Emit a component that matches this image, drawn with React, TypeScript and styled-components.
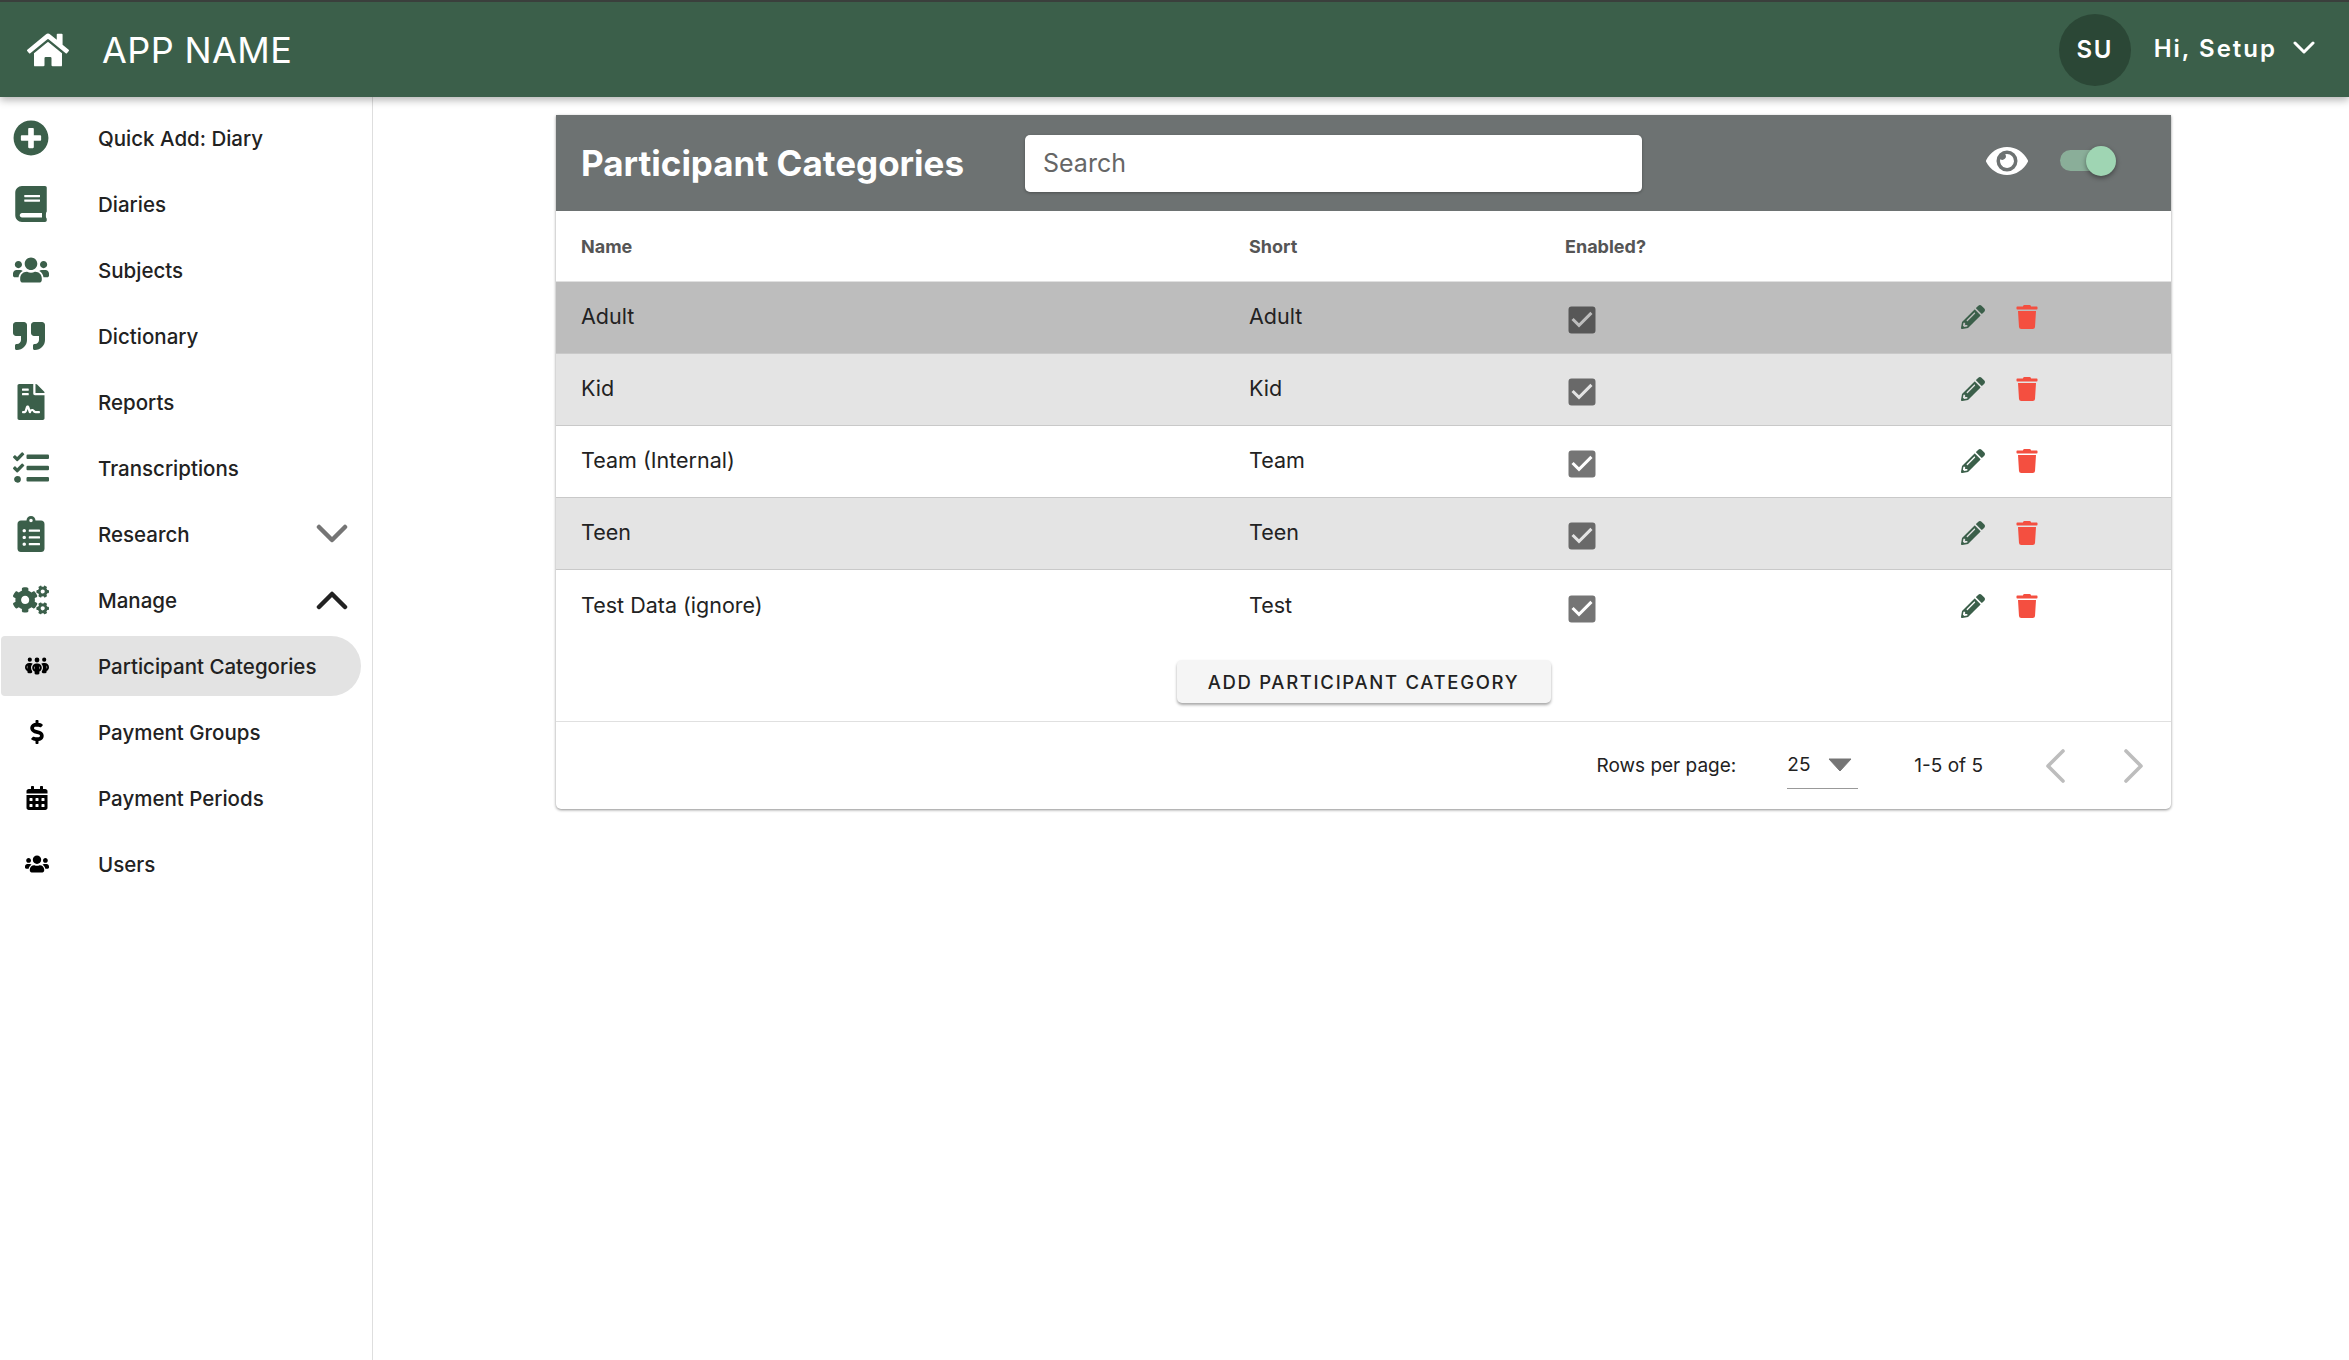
import React from "react";
import styled, { createGlobalStyle } from "styled-components";
import {
  FaHome, FaPlusCircle, FaBook, FaUsers, FaQuoteRight, FaFileContract, FaTasks,
  FaClipboardList, FaCogs, FaDollarSign, FaCalendarAlt, FaEye, FaPencilAlt, FaTrash,
} from "react-icons/fa";
import { FaPeopleGroup } from "react-icons/fa6";
import { MdCheckBox } from "react-icons/md";

const GREEN = "#3b5f4a";

const Global = createGlobalStyle`
  html, body { margin: 0; padding: 0; background: #fff; }
  body { font-family: Inter, "Noto Sans", "Liberation Sans", sans-serif; color: #222; }
`;

const Page = styled.div`
  width: 2349px;
  height: 1360px;
  display: flex;
  flex-direction: column;
  overflow: hidden;
`;

const Header = styled.header`
  position: relative;
  z-index: 2;
  height: 97px;
  box-sizing: border-box;
  border-top: 2px solid #3a3f3c;
  background: ${GREEN};
  box-shadow: 0 3px 8px rgba(0, 0, 0, 0.3);
  display: flex;
  align-items: center;
  color: #fff;
  padding: 0 34px 0 27px;
`;

const HomeSlot = styled.div`
  width: 75px;
  display: flex;
  font-size: 42px;
  svg { display: block; }
`;

const AppName = styled.div`
  font-size: 36px;
  font-weight: 400;
  flex: 1;
  letter-spacing: 0.4px;
`;

const Avatar = styled.div`
  width: 72px;
  height: 72px;
  border-radius: 50%;
  background: #2b4736;
  display: flex;
  align-items: center;
  justify-content: center;
  font-size: 24px;
  font-weight: 600;
  letter-spacing: 1.5px;
  margin-right: 23px;
`;

const Greeting = styled.div`
  font-size: 24px;
  font-weight: 600;
  letter-spacing: 2px;
  margin-top: -3px;
  margin-right: 16px;
`;

const Body = styled.div`
  flex: 1;
  display: flex;
  min-height: 0;
`;

const Sidebar = styled.nav`
  width: 373px;
  box-sizing: border-box;
  border-right: 1px solid #dedede;
  padding-top: 8px;
  display: flex;
  flex-direction: column;
`;

const NavRow = styled.div<{ $sub?: boolean; $active?: boolean }>`
  height: ${(p) => (p.$active ? 60 : 66)}px;
  margin: ${(p) => (p.$active ? "3px 11px 3px 1px" : "0")};
  box-sizing: border-box;
  display: flex;
  align-items: center;
  padding-left: ${(p) => (p.$sub ? (p.$active ? 24 : 25) : 13)}px;
  padding-right: 24px;
  background: ${(p) => (p.$active ? "#e3e3e3" : "transparent")};
  border-radius: ${(p) => (p.$active ? "4px 30px 30px 4px" : "0")};
`;

const NavIcon = styled.div<{ $sub?: boolean; $h: number }>`
  width: ${(p) => (p.$sub ? 73 : 85)}px;
  flex: none;
  display: flex;
  align-items: center;
  color: ${(p) => (p.$sub ? "#000" : GREEN)};
  svg {
    display: block;
    height: ${(p) => p.$h}px;
    width: auto;
  }
`;

const NavLabel = styled.span`
  flex: 1;
  font-size: 20.5px;
  font-weight: 500;
  color: #222;
  white-space: nowrap;
`;

const Main = styled.main`
  flex: 1;
  padding: 18px 0 0 183px;
`;

const Card = styled.section`
  width: 1615px;
  border-radius: 0 0 5px 5px;
  box-shadow: 0 1px 3px rgba(0, 0, 0, 0.45);
  background: #fff;
`;

const CardHead = styled.div`
  height: 96px;
  background: #6d7272;
  display: flex;
  align-items: center;
  padding: 0 62px 0 25px;
  color: #fff;
`;

const Title = styled.h1`
  margin: 0 25px 0 0;
  width: 419px;
  font-size: 35px;
  font-weight: 700;
  white-space: nowrap;
`;

const SearchInput = styled.input`
  width: 617px;
  height: 57px;
  box-sizing: border-box;
  border: 0;
  border-radius: 5px;
  padding: 0 18px;
  font: 400 25px Inter, "Noto Sans", sans-serif;
  color: #555;
  background: #fff;
  box-shadow: 0 1px 3px rgba(0, 0, 0, 0.3);
  &::placeholder { color: #666; opacity: 1; }
`;

const HeadTools = styled.div`
  margin-left: auto;
  display: flex;
  align-items: center;
  margin-top: -5px;
`;

const EyeSlot = styled.div`
  font-size: 42px;
  margin-right: 32px;
  display: flex;
  svg { display: block; }
`;

const Toggle = styled.div`
  position: relative;
  width: 49px;
  height: 21px;
  border-radius: 11px;
  background: #8aae99;
`;

const Thumb = styled.span`
  position: absolute;
  right: -7px;
  top: -4px;
  width: 30px;
  height: 30px;
  border-radius: 50%;
  background: #9fd5b3;
  box-shadow: 0 2px 5px rgba(0, 0, 0, 0.4);
`;

const GridRow = styled.div<{ $bg?: string; $last?: boolean; $head?: boolean }>`
  display: grid;
  grid-template-columns: 668px 316px 396px 1fr;
  align-items: center;
  box-sizing: border-box;
  height: ${(p) => (p.$head ? 71 : 72)}px;
  padding-left: 25px;
  background: ${(p) => p.$bg || "#fff"};
  border-bottom: ${(p) => (p.$last ? "0" : "1px solid #c9c9c9")};
  ${(p) => (p.$head ? "border-bottom: 1px solid #e0e0e0;" : "")}
`;

const HeadCell = styled.div`
  font-size: 18px;
  font-weight: 700;
  color: #555;
`;

const Cell = styled.div`
  font-size: 21.5px;
  font-weight: 400;
  color: #222;
  margin-top: -3px;
`;

const CheckCell = styled.div`
  color: rgba(0, 0, 0, 0.54);
  font-size: 36px;
  margin-left: -1px;
  margin-top: 5px;
  height: 36px;
  svg { display: block; }
`;

const Actions = styled.div`
  display: flex;
  align-items: center;
  gap: 30px;
  font-size: 24px;
  margin-top: -1px;
  svg { display: block; height: 24px; width: auto; }
`;

const EditIcon = styled(FaPencilAlt)`
  color: ${GREEN};
`;

const DeleteIcon = styled(FaTrash)`
  color: #f44f40;
`;

const ButtonBar = styled.div`
  display: flex;
  justify-content: center;
  padding: 18px 0;
  border-bottom: 1px solid #e0e0e0;
`;

const AddButton = styled.button`
  width: 374px;
  height: 43px;
  border: 0;
  border-radius: 5px;
  background: #f5f5f5;
  color: #222;
  font: 500 18.5px Inter, "Noto Sans", sans-serif;
  letter-spacing: 1.7px;
  text-transform: uppercase;
  box-shadow: 0 2px 3px rgba(0, 0, 0, 0.35);
`;

const Pager = styled.div`
  height: 87px;
  display: flex;
  align-items: center;
  justify-content: flex-end;
  padding-right: 26px;
  font-size: 19px;
  color: #222;
`;

const PagerLabel = styled.span`
  margin-right: 51px;
`;

const RowsSelect = styled.div`
  width: 71px;
  height: 47px;
  box-sizing: border-box;
  border-bottom: 1px solid #999;
  display: flex;
  align-items: center;
  justify-content: space-between;
  padding: 0 6px 0 0;
  margin: 23px 56px 0 0;
  position: relative;
  top: -12px;
`;

const Range = styled.span`
  margin-right: 61px;
`;

const Chevron = styled.svg`
  display: block;
  width: 22px;
  height: 34px;
  fill: none;
  stroke: #bdbdbd;
  stroke-width: 3.6;
  stroke-linecap: round;
  stroke-linejoin: round;
  & + & { margin-left: 57px; }
`;

const ExpandIcon = styled.svg<{ $dark?: boolean }>`
  display: block;
  width: 32px;
  height: 20px;
  fill: none;
  stroke: ${(p) => (p.$dark ? "#222" : "#757575")};
  stroke-width: 4.5;
  stroke-linecap: round;
  stroke-linejoin: round;
`;

const GreetingChevron = styled.svg`
  display: block;
  width: 22px;
  height: 14px;
  fill: none;
  stroke: #fff;
  stroke-width: 3;
  stroke-linecap: round;
  stroke-linejoin: round;
  margin-top: -4px;
`;

const nav = [
  { label: "Quick Add: Diary", Icon: FaPlusCircle, h: 36 },
  { label: "Diaries", Icon: FaBook, h: 36 },
  { label: "Subjects", Icon: FaUsers, h: 36 },
  { label: "Dictionary", Icon: FaQuoteRight, h: 32 },
  { label: "Reports", Icon: FaFileContract, h: 36 },
  { label: "Transcriptions", Icon: FaTasks, h: 36 },
  { label: "Research", Icon: FaClipboardList, h: 36, expand: "down" },
  { label: "Manage", Icon: FaCogs, h: 36, expand: "up" },
  { label: "Participant Categories", Icon: FaPeopleGroup, h: 24, sub: true, active: true },
  { label: "Payment Groups", Icon: FaDollarSign, h: 24, sub: true },
  { label: "Payment Periods", Icon: FaCalendarAlt, h: 24, sub: true },
  { label: "Users", Icon: FaUsers, h: 24, sub: true },
];

const rows = [
  { name: "Adult", short: "Adult", bg: "#bdbdbd" },
  { name: "Kid", short: "Kid", bg: "#e4e4e4" },
  { name: "Team (Internal)", short: "Team", bg: "#fff" },
  { name: "Teen", short: "Teen", bg: "#e4e4e4" },
  { name: "Test Data (ignore)", short: "Test", bg: "#fff", last: true },
];

export default function App() {
  return (
    <Page>
      <Global />
      <Header>
        <HomeSlot><FaHome /></HomeSlot>
        <AppName>APP NAME</AppName>
        <Avatar>SU</Avatar>
        <Greeting>Hi, Setup</Greeting>
        <GreetingChevron viewBox="0 0 22 14"><polyline points="2,2 11,11 20,2" /></GreetingChevron>
      </Header>
      <Body>
        <Sidebar>
          {nav.map(({ label, Icon, h, sub, active, expand }) => (
            <NavRow key={label} $sub={sub} $active={active}>
              <NavIcon $sub={sub} $h={h}><Icon /></NavIcon>
              <NavLabel>{label}</NavLabel>
              {expand === "down" && (
                <ExpandIcon viewBox="0 0 32 20"><polyline points="3,3 16,16 29,3" /></ExpandIcon>
              )}
              {expand === "up" && (
                <ExpandIcon $dark viewBox="0 0 32 20"><polyline points="3,17 16,4 29,17" /></ExpandIcon>
              )}
            </NavRow>
          ))}
        </Sidebar>
        <Main>
          <Card>
            <CardHead>
              <Title>Participant Categories</Title>
              <SearchInput placeholder="Search" readOnly />
              <HeadTools>
                <EyeSlot><FaEye /></EyeSlot>
                <Toggle><Thumb /></Toggle>
              </HeadTools>
            </CardHead>
            <GridRow $head>
              <HeadCell>Name</HeadCell>
              <HeadCell>Short</HeadCell>
              <HeadCell>Enabled?</HeadCell>
              <div />
            </GridRow>
            {rows.map((r) => (
              <GridRow key={r.name} $bg={r.bg} $last={r.last}>
                <Cell>{r.name}</Cell>
                <Cell>{r.short}</Cell>
                <CheckCell><MdCheckBox /></CheckCell>
                <Actions><EditIcon /><DeleteIcon /></Actions>
              </GridRow>
            ))}
            <ButtonBar><AddButton>Add Participant Category</AddButton></ButtonBar>
            <Pager>
              <PagerLabel>Rows per page:</PagerLabel>
              <RowsSelect>
                <span>25</span>
                <svg width="24" height="14" viewBox="0 0 24 14"><path d="M1 1h22L12 13z" fill="#757575" stroke="#757575" strokeLinejoin="round" /></svg>
              </RowsSelect>
              <Range>1-5 of 5</Range>
              <Chevron viewBox="0 0 22 34"><polyline points="19,2 4,17 19,32" /></Chevron>
              <Chevron viewBox="0 0 22 34"><polyline points="3,2 18,17 3,32" /></Chevron>
            </Pager>
          </Card>
        </Main>
      </Body>
    </Page>
  );
}
